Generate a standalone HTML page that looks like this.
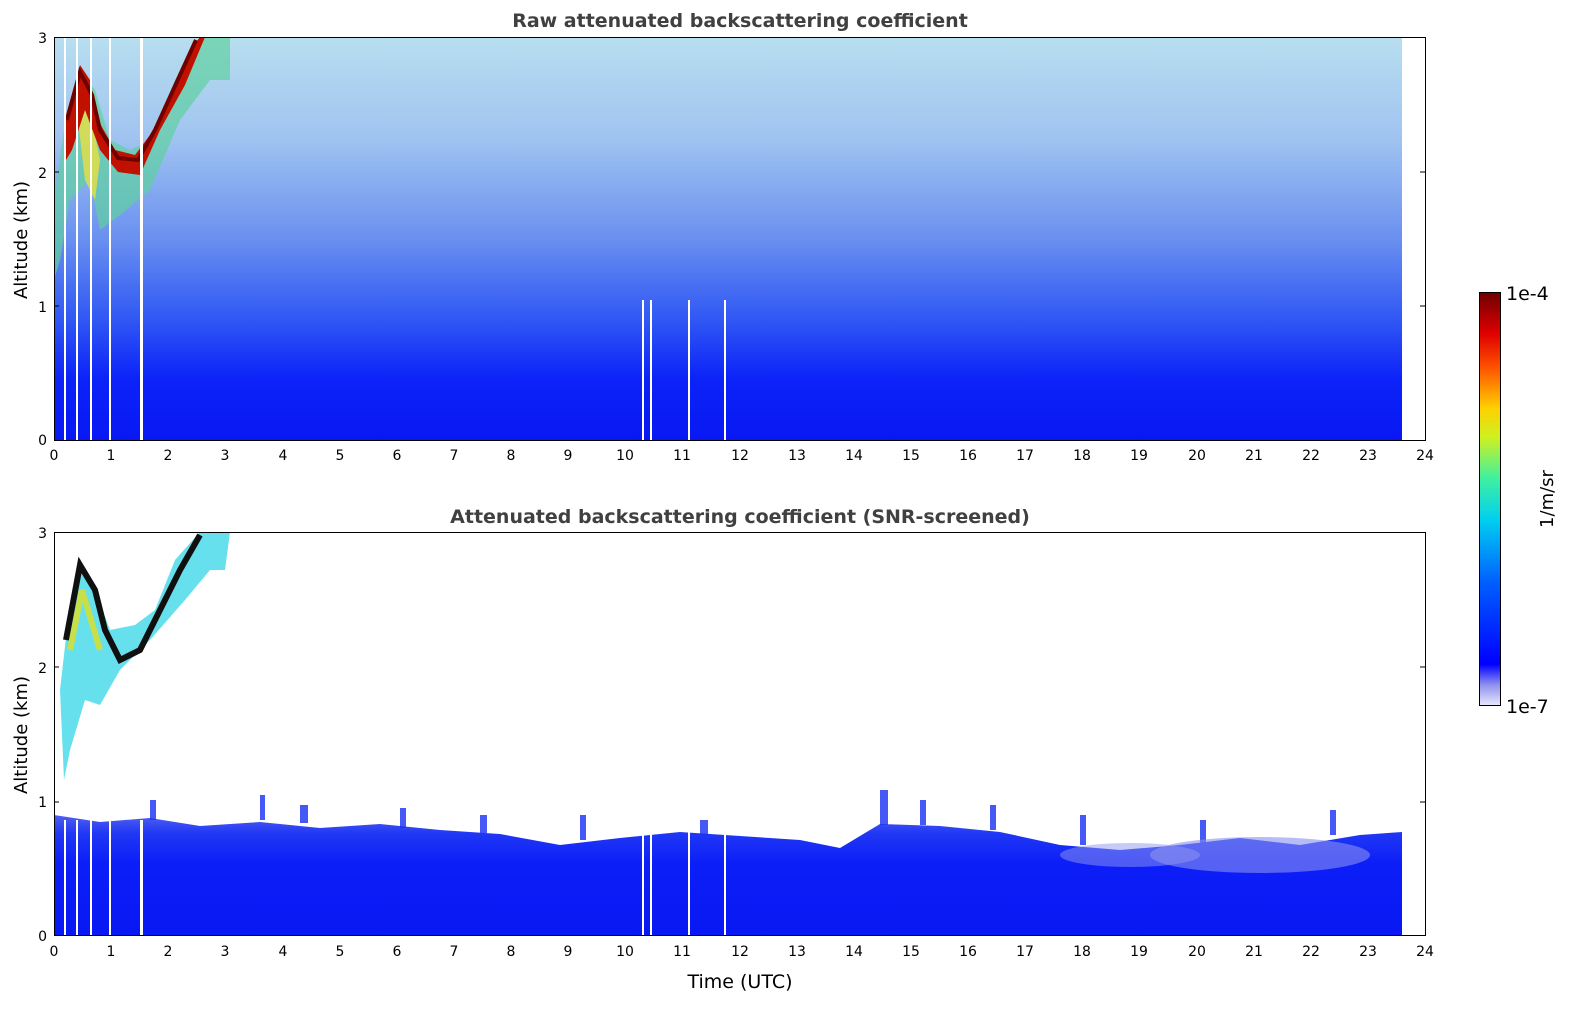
<!DOCTYPE html>
<html><head><meta charset="utf-8"><style>
html,body{margin:0;padding:0;background:#fff;}
body{width:1595px;height:1020px;overflow:hidden;font-family:"DejaVu Sans","Liberation Sans",sans-serif;}
</style></head><body>
<svg width="1595" height="1020" xmlns="http://www.w3.org/2000/svg" font-family="DejaVu Sans, Liberation Sans, sans-serif">
<defs>
<linearGradient id="topg" x1="0" y1="1" x2="0" y2="0">
<stop offset="0" stop-color="#0818f4"/>
<stop offset="0.15" stop-color="#0c22f8"/>
<stop offset="0.3" stop-color="#3058f4"/>
<stop offset="0.5" stop-color="#6a90f0"/>
<stop offset="0.75" stop-color="#a0c4f0"/>
<stop offset="1" stop-color="#b8def0"/>
</linearGradient>
<linearGradient id="botg" x1="0" y1="1" x2="0" y2="0">
<stop offset="0" stop-color="#0818f4"/>
<stop offset="0.6" stop-color="#0c1ef8"/>
<stop offset="0.85" stop-color="#2038f4"/>
<stop offset="1" stop-color="#5060f0"/>
</linearGradient>
<linearGradient id="cbar" x1="0" y1="1" x2="0" y2="0">
<stop offset="0" stop-color="#e8e8fc"/>
<stop offset="0.05" stop-color="#9090f0"/>
<stop offset="0.1" stop-color="#0000ff"/>
<stop offset="0.3" stop-color="#0060ff"/>
<stop offset="0.45" stop-color="#00d0f0"/>
<stop offset="0.55" stop-color="#40f0a0"/>
<stop offset="0.65" stop-color="#d0f020"/>
<stop offset="0.72" stop-color="#ffd000"/>
<stop offset="0.82" stop-color="#ff5000"/>
<stop offset="0.9" stop-color="#e00000"/>
<stop offset="1" stop-color="#700000"/>
</linearGradient>
</defs>
<!-- top plot -->
<text x="740" y="27" text-anchor="middle" font-size="19" font-weight="bold" fill="#404040">Raw attenuated backscattering coefficient</text>
<rect x="54" y="37" width="1348" height="403" fill="url(#topg)"/>
<path d="M54,200 L64,130 L80,70 L95,90 L110,140 L130,150 L150,140 L175,80 L200,37 L230,37 L230,80 L210,80 L180,120 L150,190 L120,215 L100,230 L90,180 L70,200 L60,260 L54,280Z" fill="#60d0a0" opacity="0.7"/>
<path d="M70,140 L78,120 L85,180 L95,200 L100,160 L92,120 L80,100 L70,130Z" fill="#e8e040" opacity="0.8"/>
<path d="M64,130 L66,115 L80,65 L90,80 L98,120 L115,150 L135,155 L150,135 L170,100 L190,50 L200,37 L205,37 L185,85 L160,130 L140,175 L118,172 L100,150 L85,110 L72,150 L66,160Z" fill="#c01000"/>
<path d="M67,120 L80,72 L92,95 L100,130 L118,158 L138,160 L155,130 L180,75 L196,40" stroke="#700000" stroke-width="4" fill="none"/>
<g fill="#fff">
<rect x="64" y="37" width="2" height="403"/><rect x="76" y="37" width="2" height="403"/><rect x="90" y="37" width="2" height="403"/><rect x="109" y="37" width="2" height="403"/><rect x="140" y="37" width="3" height="403"/>
<rect x="642" y="300" width="2" height="140"/><rect x="650" y="300" width="2" height="140"/><rect x="688" y="300" width="2" height="140"/><rect x="724" y="300" width="2" height="140"/>
</g>
<rect x="54.5" y="37.5" width="1371" height="403" fill="none" stroke="#000"/>
<!-- bottom plot -->
<text x="740" y="523" text-anchor="middle" font-size="19" font-weight="bold" fill="#404040">Attenuated backscattering coefficient (SNR-screened)</text>
<path d="M54,936 L54,815 L100,822 L150,818 L200,826 L260,822 L320,828 L380,824 L440,830 L500,834 L560,845 L620,838 L680,832 L740,836 L800,840 L840,848 L880,824 L940,826 L1000,832 L1060,845 L1120,850 L1180,845 L1240,838 L1300,845 L1360,835 L1402,832 L1402,936Z" fill="url(#botg)"/>
<g fill="#1830f4" opacity="0.8">
<rect x="150" y="800" width="6" height="20"/><rect x="260" y="795" width="5" height="25"/><rect x="300" y="805" width="8" height="18"/><rect x="400" y="808" width="6" height="20"/><rect x="480" y="815" width="7" height="18"/><rect x="580" y="815" width="6" height="25"/><rect x="700" y="820" width="8" height="15"/><rect x="880" y="790" width="8" height="35"/><rect x="920" y="800" width="6" height="25"/><rect x="990" y="805" width="6" height="25"/><rect x="1080" y="815" width="6" height="30"/><rect x="1200" y="820" width="6" height="25"/><rect x="1330" y="810" width="6" height="25"/>
</g>
<ellipse cx="1260" cy="855" rx="110" ry="18" fill="#8890f0" opacity="0.6"/>
<ellipse cx="1130" cy="855" rx="70" ry="12" fill="#9098f0" opacity="0.5"/>
<path d="M60,690 L68,620 L80,560 L95,590 L110,630 L135,625 L155,610 L175,560 L200,532 L230,532 L225,570 L210,570 L185,600 L150,640 L120,670 L100,705 L85,700 L70,750 L64,780Z" fill="#40d8e8" opacity="0.8"/>
<path d="M66,640 L80,565 L95,590 L105,630 L120,660 L140,650 L160,610 L180,570 L200,535" stroke="#101010" stroke-width="6" fill="none"/>
<path d="M70,650 L82,590 L100,650" stroke="#e0e020" stroke-width="6" fill="none" opacity="0.8"/>
<g fill="#fff">
<rect x="64" y="820" width="2" height="116"/><rect x="76" y="820" width="2" height="116"/><rect x="90" y="820" width="2" height="116"/><rect x="109" y="820" width="2" height="116"/><rect x="140" y="820" width="3" height="116"/>
<rect x="642" y="830" width="2" height="106"/><rect x="650" y="830" width="2" height="106"/><rect x="688" y="830" width="2" height="106"/><rect x="724" y="830" width="2" height="106"/>
</g>
<rect x="54.5" y="532.5" width="1371" height="403" fill="none" stroke="#000"/>
<!-- ticks and labels -->
<g font-size="14" fill="#000" text-anchor="middle">
<text x="54" y="460">0</text><text x="111" y="460">1</text><text x="168" y="460">2</text><text x="225" y="460">3</text><text x="283" y="460">4</text><text x="340" y="460">5</text><text x="397" y="460">6</text><text x="454" y="460">7</text><text x="511" y="460">8</text><text x="568" y="460">9</text><text x="625" y="460">10</text><text x="682" y="460">11</text><text x="740" y="460">12</text><text x="797" y="460">13</text><text x="854" y="460">14</text><text x="911" y="460">15</text><text x="968" y="460">16</text><text x="1025" y="460">17</text><text x="1082" y="460">18</text><text x="1139" y="460">19</text><text x="1197" y="460">20</text><text x="1254" y="460">21</text><text x="1311" y="460">22</text><text x="1368" y="460">23</text><text x="1425" y="460">24</text>
</g>
<g font-size="14" fill="#000" text-anchor="middle" transform="translate(0,496)">
<text x="54" y="460">0</text><text x="111" y="460">1</text><text x="168" y="460">2</text><text x="225" y="460">3</text><text x="283" y="460">4</text><text x="340" y="460">5</text><text x="397" y="460">6</text><text x="454" y="460">7</text><text x="511" y="460">8</text><text x="568" y="460">9</text><text x="625" y="460">10</text><text x="682" y="460">11</text><text x="740" y="460">12</text><text x="797" y="460">13</text><text x="854" y="460">14</text><text x="911" y="460">15</text><text x="968" y="460">16</text><text x="1025" y="460">17</text><text x="1082" y="460">18</text><text x="1139" y="460">19</text><text x="1197" y="460">20</text><text x="1254" y="460">21</text><text x="1311" y="460">22</text><text x="1368" y="460">23</text><text x="1425" y="460">24</text>
</g>
<g font-size="14" text-anchor="end">
<text x="47" y="445">0</text><text x="47" y="312">1</text><text x="47" y="178">2</text><text x="47" y="43">3</text>
<text x="47" y="941">0</text><text x="47" y="807">1</text><text x="47" y="673">2</text><text x="47" y="538">3</text>
</g>
<g stroke="#000">
<path d="M1420,306H1425M1420,172H1425M1420,802H1425M1420,667H1425M54,306H59M54,172H59M54,802H59M54,667H59"/>
</g>
<text transform="translate(27,240) rotate(-90)" text-anchor="middle" font-size="18">Altitude (km)</text>
<text transform="translate(27,735) rotate(-90)" text-anchor="middle" font-size="18">Altitude (km)</text>
<text x="740" y="988" text-anchor="middle" font-size="19">Time (UTC)</text>
<!-- colorbar -->
<rect x="1479.5" y="292.5" width="21" height="413" fill="url(#cbar)" stroke="#000"/>
<text x="1506" y="300" font-size="19">1e-4</text>
<text x="1506" y="713" font-size="19">1e-7</text>
<text transform="translate(1553,499) rotate(-90)" text-anchor="middle" font-size="18">1/m/sr</text>
</svg>
</body></html>
